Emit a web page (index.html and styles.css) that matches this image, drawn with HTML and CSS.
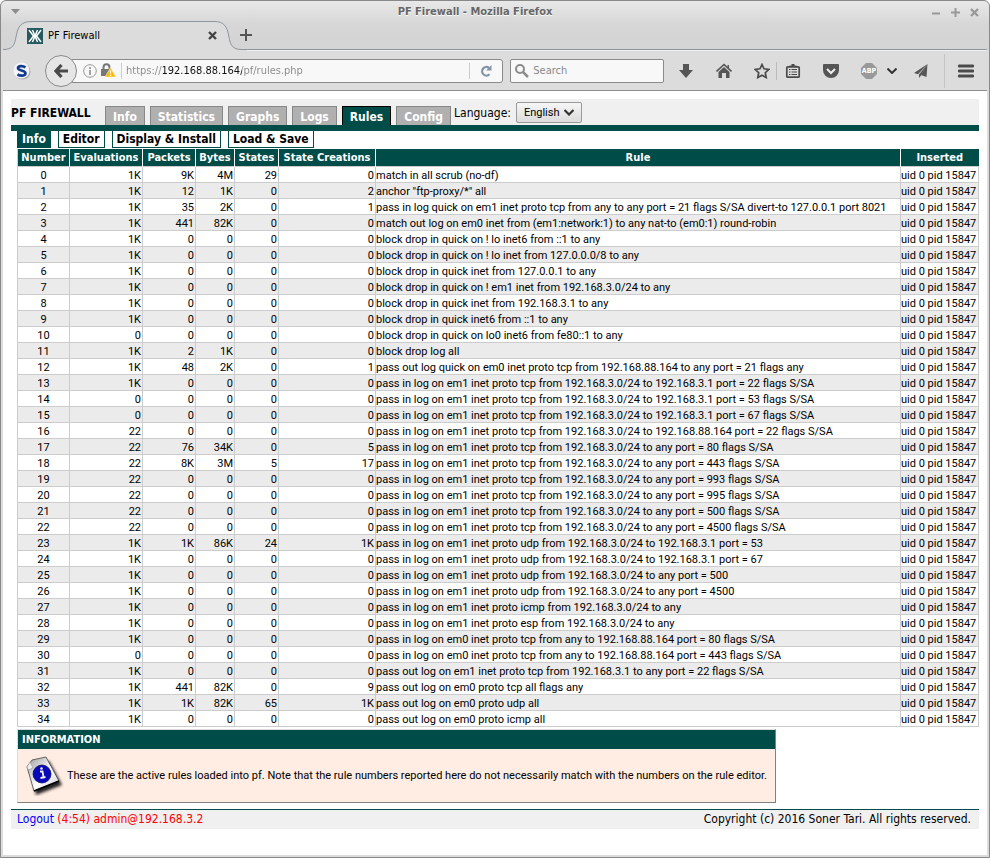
FILE: index.html
```html
<!DOCTYPE html>
<html lang="en">
<head>
<meta charset="utf-8">
<title>PF Firewall</title>
<link rel="stylesheet" href="styles.css">
</head>
<body>
<div class="window">
<header class="titlebar">
  <svg class="win-menu" viewBox="0 0 10 6" aria-hidden="true"><path d="M0 0h9L4.500 5z" fill="#8c8c8c"/></svg>
  <h1 class="window-title">PF Firewall - Mozilla Firefox</h1>
  <div class="win-buttons">
    <button aria-label="Minimize"><svg viewBox="0 0 9 9"><path d="M0 5.500h8" stroke="#999" stroke-width="2"/></svg></button>
    <button aria-label="Maximize"><svg viewBox="0 0 9 9"><path d="M0 4.500h9M4.500 0v9" stroke="#999" stroke-width="2"/></svg></button>
    <button aria-label="Close window"><svg viewBox="0 0 9 9"><path d="M1 1l7 7M8 1l-7 7" stroke="#999" stroke-width="2.300"/></svg></button>
  </div>
</header>
<div class="tabstrip">
  <div class="browser-tab">
    <svg class="tab-shape" viewBox="0 0 244 30" aria-hidden="true"><path d="M0 28.500C10 28.500 11.500 24 13 16 15 5 18 .5 29 .5H211C221 .5 224 5 226 16 227.500 24 229 28.500 239 28.500H244V30H0z" fill="#dcdcdc"/><path d="M0 28.500C10 28.500 11.500 24 13 16 15 5 18 .5 29 .5H211C221 .5 224 5 226 16 227.500 24 229 28.500 239 28.500H244" fill="none" stroke="#8e959c"/></svg>
    <svg class="favicon" viewBox="0 0 16 16" aria-hidden="true"><path d="M0 0h16v16H0z" fill="#24595f"/><path d="M2 2l4.500 6L2 14M14 2L9.500 8l4.500 6M5.500 2l5 12M10.500 2l-5 12" fill="none" stroke="#fff" stroke-width="1.500"/></svg>
    <span class="tab-label">PF Firewall</span>
    <button class="tab-close" aria-label="Close tab"><svg viewBox="0 0 9 9"><path d="M1 1l7 7M8 1l-7 7" stroke="#444" stroke-width="2.400"/></svg></button>
  </div>
  <button class="new-tab" aria-label="New tab"><svg viewBox="0 0 12 12"><path d="M0 6h12M6 0v12" stroke="#555" stroke-width="2"/></svg></button>
</div>
<div class="toolbar">
  <button class="s-button" aria-label="S"><svg viewBox="0 0 18 18"><circle cx="9.500" cy="9.500" r="8" fill="#aaa"/><circle cx="8.500" cy="8.500" r="8" fill="#f5f5f5"/><path d="M12.500 5.400C10 3.600 5 3.500 5 6.200c0 2.700 7.500 1.800 7.500 5 0 3-5.500 2.900-8 1.100" fill="none" stroke="#123c92" stroke-width="2.700"/></svg></button>
  <button class="back" aria-label="Back"><svg viewBox="0 0 14 14"><path d="M7.500 1L2 7l5.500 6M2 7h12" fill="none" stroke="#4a4a4a" stroke-width="3.200"/></svg></button>
  <div class="urlbar">
    <svg class="site-info" viewBox="0 0 14 14" aria-hidden="true"><circle cx="7" cy="7" r="6.300" fill="none" stroke="#999"/><path d="M7 6v5M7 3v2" stroke="#888" stroke-width="1.500"/></svg>
    <svg class="lock" viewBox="0 0 15 15" aria-hidden="true"><path d="M2.500 6V4.500C2.500 0 8.500 0 8.500 4.500V6" fill="none" stroke="#777" stroke-width="2"/><path d="M0 6h10v7H0z" fill="#777"/><path d="M9.500 4.500L15 14H4z" fill="#fcba03" stroke="#fff" stroke-width=".5"/><path d="M9.500 7.500v3M9.500 11.500V13" stroke="#fff" stroke-width="1.300"/></svg>
    <input class="address" type="text" aria-label="Address" value="https://192.168.88.164/pf/rules.php">
    <button class="reload" aria-label="Reload"><svg viewBox="0 0 12 12"><path d="M9 2.800A4.300 4.300 0 1 0 9.500 9.300" fill="none" stroke="#8494a6" stroke-width="2.200"/><path d="M11.500 0v5.500H6z" fill="#8494a6"/></svg></button>
  </div>
  <label class="searchbar"><svg viewBox="0 0 14 14" aria-hidden="true"><circle cx="5" cy="5" r="4" fill="none" stroke="#8c8c8c" stroke-width="2"/><path d="M8 8l5 5" stroke="#8c8c8c" stroke-width="2.500"/></svg><input type="search" placeholder="Search" aria-label="Search"></label>
  <nav class="tools" aria-label="Browser tools">
    <button aria-label="Downloads"><svg viewBox="0 0 16 16"><path d="M5 1h6v6h4l-7 8-7-8h4z" fill="#555"/></svg></button>
    <button aria-label="Home"><svg viewBox="0 0 16 16"><path d="M.5 8.500L8 1.500l7.500 7" fill="none" stroke="#555" stroke-width="1.600"/><path d="M8 4l5.500 5v6H10v-5H6v5H2.500V9zM11.500 2H13v3h-1.500z" fill="#555"/></svg></button>
    <button aria-label="Bookmark"><svg viewBox="0 0 16 16"><path d="M8 1.500l2 4.300 4.800.6-3.500 3.300.9 4.800L8 12.200l-4.200 2.300.9-4.800L1.200 6.400 6 5.800z" fill="none" stroke="#4a4a4a" stroke-width="1.700"/></svg></button>
    <button class="divided" aria-label="Bookmarks list"><svg viewBox="0 0 16 16"><rect x="1.800" y="3.800" width="12.400" height="10.400" rx="1" fill="none" stroke="#4a4a4a" stroke-width="1.700"/><path d="M4.500 4V2.500H6.500V1h3v1.500h2V4z" fill="#4a4a4a"/><path d="M4 6.500h1.500M4 9h1.500M4 11.500h1.500M6.500 6.500H12M6.500 9H12M6.500 11.500H12" stroke="#4a4a4a" stroke-width="1.200"/></svg></button>
    <button aria-label="Save to Pocket"><svg viewBox="0 0 16 16"><path d="M1 1h14q1 0 1 1v5a8 8 0 0 1-16 0V2q0-1 1-1z" fill="#555"/><path d="M4 6l4 4 4-4" fill="none" stroke="#eee" stroke-width="2"/></svg></button>
    <button class="abp" aria-label="Adblock Plus"><svg viewBox="0 0 16 16"><path d="M5 0h6l5 5v6l-5 5H5l-5-5V5z" fill="#999"/></svg><span>ABP</span></button>
    <button class="abp-menu" aria-label="Adblock menu"><svg viewBox="0 0 10 6"><path d="M.5.500L5 5 9.500.500" fill="none" stroke="#333" stroke-width="2"/></svg></button>
    <button aria-label="Share this page"><svg viewBox="0 0 16 16"><path d="M14.500 1L1 10l4 1.200zM14.500 1L6 11.500V15l2-2.500z" fill="#555"/><path d="M14.500 1L8 12l5.500 2z" fill="#555"/></svg></button>
    <button class="app-menu" aria-label="Open menu"><svg viewBox="0 0 16 14"><path d="M1 2h14M1 7h14M1 12h14" stroke="#4a4a4a" stroke-width="2.800" stroke-linecap="round"/></svg></button>
  </nav>
</div>
<main class="page">
<div class="site-header">
  <strong class="brand">PF FIREWALL</strong>
  <nav class="main-tabs" aria-label="Sections"><a href="#info">Info</a><a href="#statistics">Statistics</a><a href="#graphs">Graphs</a><a href="#logs">Logs</a><a class="active" href="#rules">Rules</a><a href="#config">Config</a></nav>
  <label class="lang-label" for="lang">Language:</label>
  <span class="lang-box"><select id="lang"><option>English</option></select><svg viewBox="0 0 10 7" aria-hidden="true"><path d="M.5 1L5 5.500 9.500 1" fill="none" stroke="#333" stroke-width="2.200"/></svg></span>
</div>
<nav class="sub-tabs" aria-label="Rules"><a class="active" href="#rules-info">Info</a><a href="#editor">Editor</a><a href="#install">Display &amp; Install</a><a href="#save">Load &amp; Save</a></nav>
<div class="content">
<table class="rules">
<colgroup><col class="c-num"><col class="c-eval"><col class="c-pack"><col class="c-bytes"><col class="c-states"><col class="c-create"><col><col class="c-ins"></colgroup>
<thead><tr><th>Number<th>Evaluations<th>Packets<th>Bytes<th>States<th>State Creations<th>Rule<th>Inserted</thead>
<tbody>
<tr><td>0<td>1K<td>9K<td>4M<td>29<td>0<td>match in all scrub (no-df)<td>uid 0 pid 15847
<tr><td>1<td>1K<td>12<td>1K<td>0<td>2<td>anchor "ftp-proxy/*" all<td>uid 0 pid 15847
<tr><td>2<td>1K<td>35<td>2K<td>0<td>1<td>pass in log quick on em1 inet proto tcp from any to any port = 21 flags S/SA divert-to 127.0.0.1 port 8021<td>uid 0 pid 15847
<tr><td>3<td>1K<td>441<td>82K<td>0<td>0<td>match out log on em0 inet from (em1:network:1) to any nat-to (em0:1) round-robin<td>uid 0 pid 15847
<tr><td>4<td>1K<td>0<td>0<td>0<td>0<td>block drop in quick on ! lo inet6 from ::1 to any<td>uid 0 pid 15847
<tr><td>5<td>1K<td>0<td>0<td>0<td>0<td>block drop in quick on ! lo inet from 127.0.0.0/8 to any<td>uid 0 pid 15847
<tr><td>6<td>1K<td>0<td>0<td>0<td>0<td>block drop in quick inet from 127.0.0.1 to any<td>uid 0 pid 15847
<tr><td>7<td>1K<td>0<td>0<td>0<td>0<td>block drop in quick on ! em1 inet from 192.168.3.0/24 to any<td>uid 0 pid 15847
<tr><td>8<td>1K<td>0<td>0<td>0<td>0<td>block drop in quick inet from 192.168.3.1 to any<td>uid 0 pid 15847
<tr><td>9<td>1K<td>0<td>0<td>0<td>0<td>block drop in quick inet6 from ::1 to any<td>uid 0 pid 15847
<tr><td>10<td>0<td>0<td>0<td>0<td>0<td>block drop in quick on lo0 inet6 from fe80::1 to any<td>uid 0 pid 15847
<tr><td>11<td>1K<td>2<td>1K<td>0<td>0<td>block drop log all<td>uid 0 pid 15847
<tr><td>12<td>1K<td>48<td>2K<td>0<td>1<td>pass out log quick on em0 inet proto tcp from 192.168.88.164 to any port = 21 flags any<td>uid 0 pid 15847
<tr><td>13<td>1K<td>0<td>0<td>0<td>0<td>pass in log on em1 inet proto tcp from 192.168.3.0/24 to 192.168.3.1 port = 22 flags S/SA<td>uid 0 pid 15847
<tr><td>14<td>0<td>0<td>0<td>0<td>0<td>pass in log on em1 inet proto tcp from 192.168.3.0/24 to 192.168.3.1 port = 53 flags S/SA<td>uid 0 pid 15847
<tr><td>15<td>0<td>0<td>0<td>0<td>0<td>pass in log on em1 inet proto tcp from 192.168.3.0/24 to 192.168.3.1 port = 67 flags S/SA<td>uid 0 pid 15847
<tr><td>16<td>22<td>0<td>0<td>0<td>0<td>pass in log on em1 inet proto tcp from 192.168.3.0/24 to 192.168.88.164 port = 22 flags S/SA<td>uid 0 pid 15847
<tr><td>17<td>22<td>76<td>34K<td>0<td>5<td>pass in log on em1 inet proto tcp from 192.168.3.0/24 to any port = 80 flags S/SA<td>uid 0 pid 15847
<tr><td>18<td>22<td>8K<td>3M<td>5<td>17<td>pass in log on em1 inet proto tcp from 192.168.3.0/24 to any port = 443 flags S/SA<td>uid 0 pid 15847
<tr><td>19<td>22<td>0<td>0<td>0<td>0<td>pass in log on em1 inet proto tcp from 192.168.3.0/24 to any port = 993 flags S/SA<td>uid 0 pid 15847
<tr><td>20<td>22<td>0<td>0<td>0<td>0<td>pass in log on em1 inet proto tcp from 192.168.3.0/24 to any port = 995 flags S/SA<td>uid 0 pid 15847
<tr><td>21<td>22<td>0<td>0<td>0<td>0<td>pass in log on em1 inet proto tcp from 192.168.3.0/24 to any port = 500 flags S/SA<td>uid 0 pid 15847
<tr><td>22<td>22<td>0<td>0<td>0<td>0<td>pass in log on em1 inet proto tcp from 192.168.3.0/24 to any port = 4500 flags S/SA<td>uid 0 pid 15847
<tr><td>23<td>1K<td>1K<td>86K<td>24<td>1K<td>pass in log on em1 inet proto udp from 192.168.3.0/24 to 192.168.3.1 port = 53<td>uid 0 pid 15847
<tr><td>24<td>1K<td>0<td>0<td>0<td>0<td>pass in log on em1 inet proto udp from 192.168.3.0/24 to 192.168.3.1 port = 67<td>uid 0 pid 15847
<tr><td>25<td>1K<td>0<td>0<td>0<td>0<td>pass in log on em1 inet proto udp from 192.168.3.0/24 to any port = 500<td>uid 0 pid 15847
<tr><td>26<td>1K<td>0<td>0<td>0<td>0<td>pass in log on em1 inet proto udp from 192.168.3.0/24 to any port = 4500<td>uid 0 pid 15847
<tr><td>27<td>1K<td>0<td>0<td>0<td>0<td>pass in log on em1 inet proto icmp from 192.168.3.0/24 to any<td>uid 0 pid 15847
<tr><td>28<td>1K<td>0<td>0<td>0<td>0<td>pass in log on em1 inet proto esp from 192.168.3.0/24 to any<td>uid 0 pid 15847
<tr><td>29<td>1K<td>0<td>0<td>0<td>0<td>pass in log on em0 inet proto tcp from any to 192.168.88.164 port = 80 flags S/SA<td>uid 0 pid 15847
<tr><td>30<td>0<td>0<td>0<td>0<td>0<td>pass in log on em0 inet proto tcp from any to 192.168.88.164 port = 443 flags S/SA<td>uid 0 pid 15847
<tr><td>31<td>1K<td>0<td>0<td>0<td>0<td>pass out log on em1 inet proto tcp from 192.168.3.1 to any port = 22 flags S/SA<td>uid 0 pid 15847
<tr><td>32<td>1K<td>441<td>82K<td>0<td>9<td>pass out log on em0 proto tcp all flags any<td>uid 0 pid 15847
<tr><td>33<td>1K<td>1K<td>82K<td>65<td>1K<td>pass out log on em0 proto udp all<td>uid 0 pid 15847
<tr><td>34<td>1K<td>0<td>0<td>0<td>0<td>pass out log on em0 proto icmp all<td>uid 0 pid 15847
</tbody>
</table>
<section class="info-box">
  <h2>INFORMATION</h2>
  <div class="info-body">
    <svg viewBox="0 0 40 40" aria-hidden="true"><defs><filter id="soft"><feGaussianBlur stdDeviation="1.500"/></filter><linearGradient id="paper" x1="0" y1="0" x2="1" y2="1"><stop offset="0" stop-color="#999"/><stop offset=".55" stop-color="#fff"/><stop offset="1" stop-color="#ccc"/></linearGradient></defs><path d="M6 12L24 5 37 29 11 39z" fill="#222" filter="url(#soft)"/><path d="M2 11L7 4 21 1 34 25 9 35z" fill="url(#paper)" stroke="#444" stroke-width=".8"/><path d="M9 35l25-10" stroke="#000" stroke-width="1.800"/><path d="M2 11l3-5 3 6-5 2z" fill="#eee" stroke="#888" stroke-width=".5"/><circle cx="17" cy="18" r="9" fill="#0808b8" stroke="#03035e" stroke-width=".7"/><path d="M15 15.500h2.500l1 5.500M15.500 22l5-1" fill="none" stroke="#eee" stroke-width="1.800"/><circle cx="16.500" cy="12.500" r="1.300" fill="#eee"/></svg>
    <p>These are the active rules loaded into pf. Note that the rule numbers reported here do not necessarily match with the numbers on the rule editor.</p>
  </div>
</section>
</div>
<footer class="site-footer"><span class="session"><a href="#logout">Logout</a> (4:54) admin@192.168.3.2</span><span>Copyright (c) 2016 Soner Tari. All rights reserved.</span></footer>
</main>
</div>
</body>
</html>
```
FILE: styles.css
```css
* { box-sizing: border-box; }
body {
  margin: 0;
  background: #fff;
  font: 11px/14px "DejaVu Sans Condensed", "DejaVu Sans", sans-serif;
  color: #000;
}
button { padding: 0; border: 0; background: none; display: flex; align-items: center; justify-content: center; }
svg { display: block; }
a { text-decoration: none; }

.window {
  min-height: 100vh;
  display: flex;
  flex-direction: column;
  border: 1px solid #888;
  border-radius: 6px 6px 0 0;
  background: linear-gradient(#e8e8e8, #d6d6d6 24px, #d4d4d4 48px, #dcdcdc 50px);
  padding: 0 2px 2px;
}
.titlebar { display: grid; grid-template-columns: 20px 1fr 60px; align-items: center; height: 20px; padding-top: 2px; }
.win-menu { width: 10px; height: 6px; margin-left: 8px; }
.window-title { margin: 0; font-size: 11px; text-align: center; color: #666; text-shadow: 0 1px #fff; }
.win-buttons { display: flex; justify-content: flex-end; gap: 10px; padding-right: 8px; }
.win-buttons svg { width: 9px; height: 9px; }

.tabstrip { display: flex; height: 29px; border-bottom: 1px solid #8e959c; }
.browser-tab { position: relative; width: 230px; height: 29px; display: flex; align-items: center; gap: 5px; padding: 0 16px 0 24px; }
.tab-shape { position: absolute; left: 0; top: 0; width: 244px; height: 30px; }
.favicon { position: relative; width: 16px; height: 16px; }
.tab-label { position: relative; flex: 1; }
.tab-close { position: relative; }
.tab-close svg { width: 9px; height: 9px; }
.new-tab { position: relative; width: 26px; }
.new-tab svg { width: 12px; height: 12px; }

.toolbar { display: flex; align-items: center; height: 41px; border-top: 1px solid #f0f0f0; border-bottom: 1px solid #8e8e8e; background: #dcdcdc; }
.s-button { margin-left: 10px; }
.s-button svg { width: 18px; height: 18px; }
.back { z-index: 1; width: 32px; height: 32px; margin-left: 14px; border: 1px solid #8a8a8a; border-radius: 50%; background: #e6e6e6; flex: none; }
.back svg { width: 14px; height: 14px; }
.urlbar { flex: 420 1 0; min-width: 0; display: flex; align-items: center; height: 24px; margin-left: -6px; padding-left: 11px; border: 1px solid #8a8a8a; border-radius: 0 3px 3px 0; background: #f8f8f8; }
.site-info { width: 14px; height: 14px; flex: none; }
.lock { width: 15px; height: 15px; margin: 0 5px 0 4px; flex: none; }
.address {
  flex: 1; min-width: 0; height: 16px; padding: 0 0 0 4px; border: 0; border-left: 1px solid #ccc; font: inherit;
  background: linear-gradient(90deg, #888 41px, #111 41px, #111 120px, #888 120px);
  -webkit-background-clip: text; background-clip: text; color: transparent;
}
.reload { width: 33px; height: 16px; border-left: 1px solid #ccc; }
.reload svg { width: 12px; height: 12px; }
.searchbar { flex: 144 1 0; min-width: 0; display: flex; align-items: center; gap: 4px; height: 24px; margin-left: 7px; padding: 0 4px; border: 1px solid #8a8a8a; border-radius: 2px; background: #f8f8f8; }
.searchbar svg { width: 14px; height: 14px; flex: none; }
.searchbar input { min-width: 0; flex: 1; border: 0; padding: 0; background: none; font: inherit; }
.searchbar input::placeholder { color: #888; }
.tools { display: flex; align-items: center; margin-left: 14px; gap: 22px; }
.tools svg { width: 16px; height: 16px; }
.tools .divided { margin-left: -16px; padding-left: 8px; height: 18px; border-left: 1px solid #bbb; }
.abp { display: grid; width: 16px; height: 16px; color: #fff; font: bold 7px/16px "DejaVu Sans Condensed", sans-serif; }
.abp svg, .abp span { grid-area: 1 / 1; }
.abp-menu { margin-left: -12px; margin-right: -6px; }
.tools .abp-menu svg { width: 10px; height: 6px; }
.tools .app-menu { height: 34px; margin-left: -7px; padding: 0 13px; border-left: 1px solid #c4c4c4; }
.app-menu svg { height: 14px; }

.page { flex: 1; padding: 8px; background: #fff; }
.site-header { display: flex; height: 32px; border-bottom: 6px solid #004c48; background: #f0f0f0; }
.brand { width: 94px; font-size: 12px; line-height: 28px; white-space: nowrap; }
.main-tabs { display: flex; align-items: flex-end; gap: 5px; }
.main-tabs a { height: 19px; padding: 0 7px; border: 1px solid #888; border-bottom: 0; background: #b0b0b0; color: #fff; font-size: 12px; font-weight: bold; line-height: 20px; }
.main-tabs .active { border-color: #000; background: #004c48; }
.lang-label { margin-left: 3px; font-size: 12px; line-height: 28px; }
.lang-box { position: relative; margin: 3px 0 0 5px; height: 21px; }
.lang-box select { appearance: none; width: 66px; height: 21px; padding: 0 7px; border: 1px solid #999; border-radius: 2px; background: linear-gradient(#f6f6f6, #dcdcdc); color: #000; font: 11px Roboto, sans-serif; }
.lang-box svg { position: absolute; right: 8px; top: 7px; width: 10px; height: 7px; pointer-events: none; }
.sub-tabs { display: flex; gap: 7px; height: 17px; margin: 0 6px; }
.sub-tabs a { padding: 0 4px; border: 1px solid #004c48; border-top: 0; color: #000; font-size: 12px; font-weight: bold; line-height: 16px; }
.sub-tabs .active { background: #004c48; color: #fff; }

.content { padding: 1px 0 6px 6px; }
.rules { width: 100%; table-layout: fixed; border-collapse: collapse; }
.c-num { width: 52px; } .c-eval { width: 73px; } .c-pack { width: 53px; } .c-bytes { width: 39px; }
.c-states { width: 44px; } .c-create { width: 97px; } .c-ins { width: 78px; }
.rules th { height: 17px; padding: 0; background: #004c48; border-left: 1px solid #fff; color: #fff; line-height: 17px; white-space: nowrap; }
.rules th:first-child { border-left-color: #ccc; }
.rules td { height: 16px; padding: 2px 1px 0; border: 1px solid #ccc; font-family: Roboto, sans-serif; line-height: 13px; text-align: right; white-space: nowrap; }
.rules td:first-child { text-align: center; }
.rules td:nth-child(n+7) { padding: 2px 0 0; text-align: left; }
.rules tbody tr:nth-child(even) { background: #ebebeb; }

.info-box { width: 759px; max-width: 100%; margin-top: 2px; border: 1px solid #808080; border-top-color: #ddd; border-left-color: #ddd; background: #ffece3; }
.info-box h2 { margin: 0; padding: 0 4px; background: #004c48; color: #fff; font-size: 11px; line-height: 19px; }
.info-body { display: flex; align-items: center; gap: 2px; height: 53px; padding-left: 7px; }
.info-body svg { width: 40px; height: 40px; flex: none; }
.info-body p { margin: 0; font-family: Roboto, sans-serif; }
.site-footer { display: flex; justify-content: space-between; padding: 0 8px 0 6px; border-top: 1px solid #004c48; background: #f0f0f0; font-size: 12px; line-height: 19px; }
.session { color: #f00; }
.session a { color: #00f; }
```
